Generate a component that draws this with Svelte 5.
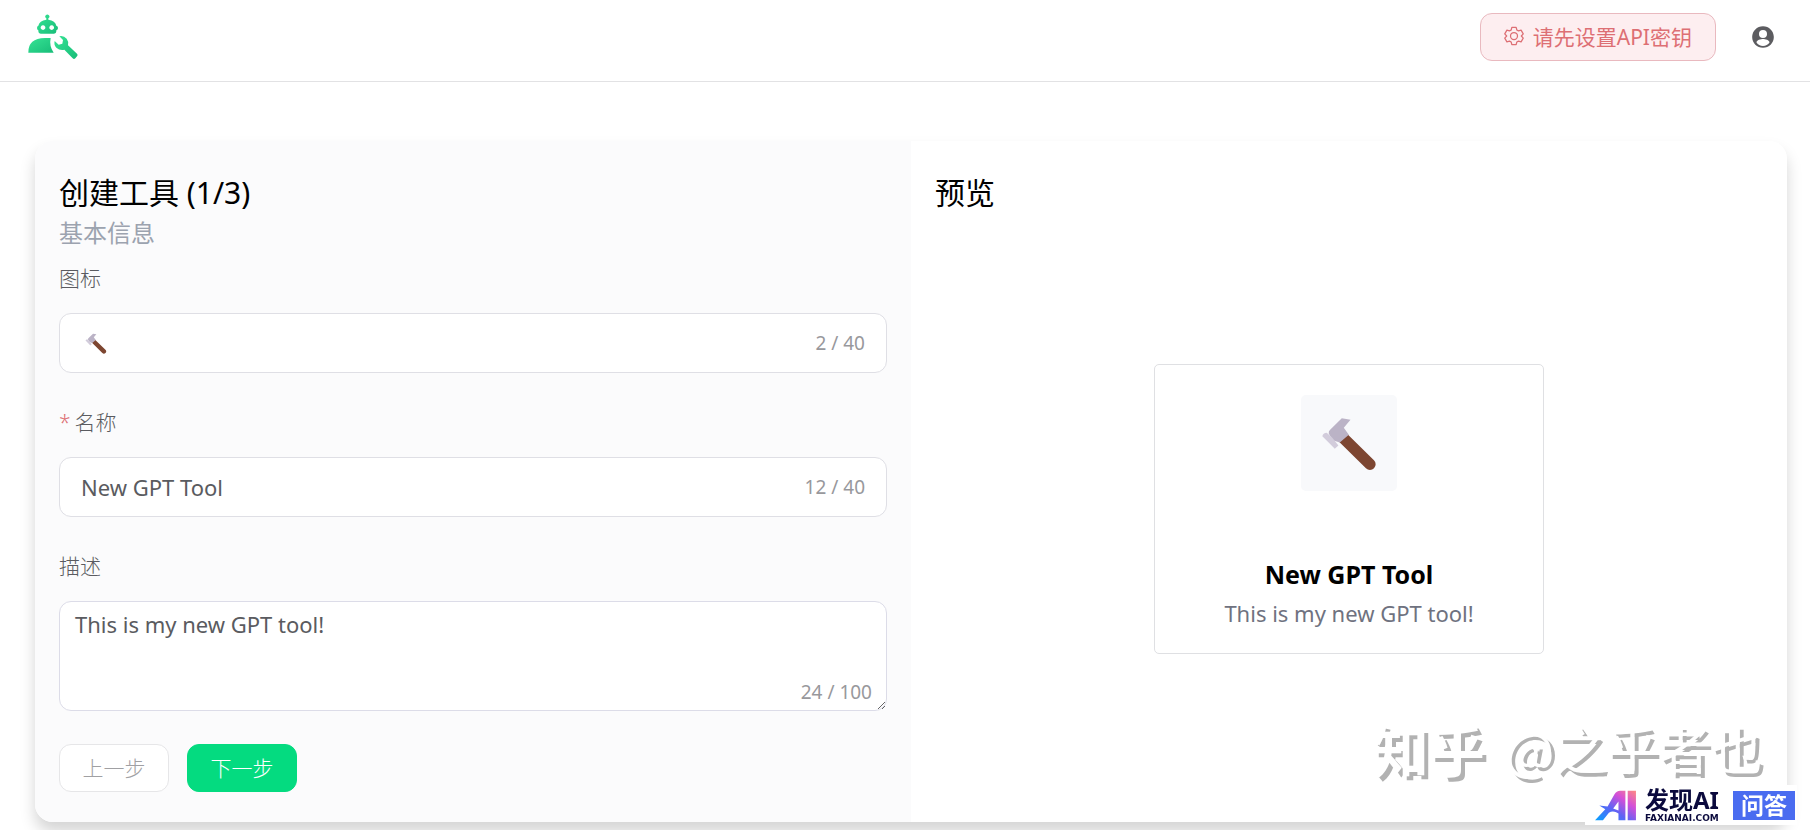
<script lang="ts">
  let icon = $state("🔨");
  let name = $state("New GPT Tool");
  let description = $state("This is my new GPT tool!");
</script>

{#snippet hammer()}
  <svg class="hammer" viewBox="545 194 170 170" aria-hidden="true">
    <path d="M613 267 691 344" stroke="#7d4631" stroke-width="34" stroke-linecap="round" />
    <path d="M607 207 633 211 613 235 628 256 601 279 580 272 568 252Q567 245 573 240Z" fill="#bbb3c6" />
    <path d="M549 260Q551 251 562 250L578 264 597 288 586 298 570 281Z" fill="#d2ccdb" />
  </svg>
{/snippet}

<header class="topbar">
  <a class="logo" href="/" aria-label="Home">
    <svg viewBox="82 40 154 138" aria-hidden="true">
      <defs>
        <linearGradient id="logo-fill" x1="0" y1="0" x2="1" y2="1">
          <stop offset="0" stop-color="#36e394" />
          <stop offset="1" stop-color="#18bd79" />
        </linearGradient>
      </defs>
      <g fill="url(#logo-fill)">
        <path
          fill-rule="evenodd"
          d="M139 57V53A6 6 0 1 1 145 53V57Q166 60 169 75Q174 76 174 82T169 89V92Q169 99 162 99H122Q115 99 115 92V89Q111 88 111 82T115 75Q118 60 139 57ZM129 74a7 7 0 1 0 .1 0ZM155 74a7 7 0 1 0 .1 0Z"
        />
        <path d="M85 156Q84 113 135 112H152Q147 136 161 156Z" />
        <path
          d="M178 107Q191 104 200 114Q207 123 204 134L231 159Q235 163 231 167L226 173Q222 177 218 173L193 147Q179 150 169 141Q161 133 164 121L176 132 187 129 189 118Z"
        />
      </g>
    </svg>
  </a>
  <div class="actions">
    <button class="api-key" type="button">
      <svg viewBox="0 0 24 24" aria-hidden="true">
        <path
          d="M9.4 1.6h5.2l.8 3.2 2 1.1 3.1-.9 2.6 4.5-2.3 2.5 2.3 2.5-2.6 4.5-3.1-.9-2 1.1-.8 3.2H9.4l-.8-3.2-2-1.1-3.1.9-2.6-4.5L3.2 12 .9 9.5 3.5 5l3.1.9 2-1.1Z"
        />
        <circle cx="12" cy="12" r="4.2" />
      </svg>
      请先设置API密钥
    </button>
    <button class="account" type="button" aria-label="Account">
      <svg viewBox="0 0 24 24" aria-hidden="true">
        <path
          d="M12 2C6.48 2 2 6.48 2 12s4.48 10 10 10 10-4.48 10-10S17.52 2 12 2zm0 3.5a3.7 3.7 0 1 1 0 7.4 3.7 3.7 0 0 1 0-7.4zm0 14.7c-2.5 0-4.71-1.28-6-3.22.03-1.99 4-3.08 6-3.08s5.97 1.09 6 3.08a7.2 7.2 0 0 1-6 3.22z"
        />
      </svg>
    </button>
  </div>
</header>

<main>
  <section class="panel editor">
    <h1>创建工具 (1/3)</h1>
    <p class="step">基本信息</p>
    <form onsubmit={(e) => e.preventDefault()}>
      <div class="field">
        <label for="tool-icon">图标</label>
        <div class="box">
          {@render hammer()}
          <input id="tool-icon" class="icon-value" bind:value={icon} maxlength="40" />
          <span class="count">{icon.length} / 40</span>
        </div>
      </div>
      <div class="field">
        <label for="tool-name"><span class="required">*</span>名称</label>
        <div class="box">
          <input id="tool-name" bind:value={name} maxlength="40" />
          <span class="count">{name.length} / 40</span>
        </div>
      </div>
      <div class="field">
        <label for="tool-description">描述</label>
        <div class="area">
          <textarea id="tool-description" bind:value={description} maxlength="100"></textarea>
          <span class="count">{description.length} / 100</span>
        </div>
      </div>
      <div class="steps">
        <button class="prev" type="button" disabled>上一步</button>
        <button class="next" type="submit">下一步</button>
      </div>
    </form>
  </section>

  <section class="panel preview">
    <h1>预览</h1>
    <div class="stage">
      <article class="tool">
        <div class="tile">{@render hammer()}</div>
        <h2>{name}</h2>
        <p>{description}</p>
      </article>
    </div>
  </section>
</main>

<div class="credit"><b>知乎</b><span>@之乎者也</span></div>

<div class="badge">
  <svg viewBox="730 268 128 94" aria-hidden="true">
    <defs>
      <linearGradient id="badge-fill" x1="0" y1="1" x2="1" y2="0">
        <stop offset="0" stop-color="#05a3ff" />
        <stop offset=".4" stop-color="#5d63f5" />
        <stop offset=".7" stop-color="#d44fd8" />
        <stop offset="1" stop-color="#ff8a80" />
      </linearGradient>
    </defs>
    <path
      fill="url(#badge-fill)"
      fill-rule="evenodd"
      d="M732 360 763 326 745 315 770 318 791 281Q797 270 808 270H824V360H803V339Q787 328 774 337L756 360ZM803 303 787 324 803 330ZM831 270H856V360H831Z"
    />
  </svg>
  <div class="brand">
    <strong>发现AI</strong>
    <small>FAXIANAI.COM</small>
  </div>
  <span class="tag">问答</span>
</div>

<style>
  :global(body) {
    margin: 0;
    background: #fff;
    color: #000;
    font-family: "Noto Sans", "Noto Sans CJK SC", sans-serif;
  }

  button,
  input,
  textarea {
    box-sizing: border-box;
    font: inherit;
  }

  h1,
  h2,
  p {
    margin: 0;
    font-weight: 400;
  }

  .topbar {
    display: flex;
    align-items: center;
    justify-content: space-between;
    box-sizing: border-box;
    height: 82px;
    padding: 0 34px 8px 27px;
    border-bottom: 1px solid #e2e2e4;
  }

  .logo svg {
    display: block;
    width: 52px;
    height: 46px;
  }

  .actions {
    display: flex;
    align-items: center;
    gap: 34px;
  }

  .api-key {
    display: flex;
    align-items: center;
    gap: 9px;
    height: 48px;
    padding: 0 23px 2px;
    border: 1px solid #e9b9bf;
    border-radius: 12px;
    background: #fdeef0;
    color: #dd6f74;
    font-size: 21px;
  }

  .api-key svg {
    width: 20px;
    height: 20px;
    fill: none;
    stroke: currentColor;
    stroke-width: 1.5;
    stroke-linejoin: round;
  }

  .account {
    padding: 0;
    border: 0;
    background: none;
  }

  .account svg {
    display: block;
    width: 26px;
    height: 26px;
    fill: #5c5c60;
  }

  main {
    display: flex;
    margin: 59px 23px 8px 35px;
    border-radius: 18px;
    box-shadow: 0 10px 15px rgba(0, 0, 0, 0.17);
  }

  .panel {
    flex: 1;
    box-sizing: border-box;
    min-width: 0;
    padding: 24px 24px 30px;
  }

  .editor {
    border-radius: 18px 0 0 18px;
    background: #fbfbfc;
  }

  .preview {
    display: flex;
    flex-direction: column;
    border-radius: 0 18px 18px 0;
    background: #fff;
  }

  h1 {
    font-size: 30px;
    line-height: 56px;
  }

  .step {
    color: #9ca3af;
    font-size: 24px;
    line-height: 24px;
  }

  .field {
    margin-bottom: 16px;
    color: #5a5b60;
    font-size: 22px;
  }

  label {
    display: block;
    padding-bottom: 2px;
    font-size: 21px;
    font-weight: 300;
    line-height: 66px;
  }

  .required {
    margin-right: 4px;
    color: #dd6f74;
  }

  .box {
    display: flex;
    align-items: center;
    box-sizing: border-box;
    height: 60px;
    padding: 0 21px;
    border: 1px solid #dfdfe5;
    border-radius: 12px;
    background: #fff;
  }

  .box input {
    flex: 1;
    min-width: 0;
    padding: 0;
    border: 0;
    outline: 0;
    background: none;
    color: #5a5b60;
  }

  .hammer {
    display: block;
    fill: none;
  }

  .box .hammer {
    width: 22px;
    height: 22px;
    margin-left: 4px;
  }

  .box .icon-value {
    color: transparent;
  }

  .count {
    color: #98989c;
    font-size: 19px;
    line-height: 24px;
  }

  .area {
    position: relative;
  }

  textarea {
    display: block;
    width: 100%;
    height: 110px;
    padding: 7px 15px;
    border: 1px solid #dcdce8;
    border-radius: 12px;
    outline: 0;
    background: #fff;
    color: #5a5b60;
    line-height: 30px;
    resize: vertical;
  }

  .area .count {
    position: absolute;
    right: 15px;
    bottom: 7px;
  }

  .steps {
    display: flex;
    gap: 18px;
    padding-top: 17px;
  }

  .steps button {
    width: 110px;
    height: 48px;
    padding: 0 0 3px;
    border: 1px solid #e6e6e8;
    border-radius: 12px;
    font-size: 21px;
    font-weight: 300;
  }

  .steps .prev {
    background: #fff;
    color: #a0a0a3;
  }

  .steps .next {
    border-color: #04db80;
    background: #04db80;
    color: #fff;
  }

  .stage {
    display: flex;
    flex: 1;
    align-items: center;
    justify-content: center;
  }

  .tool {
    display: flex;
    flex-direction: column;
    align-items: center;
    box-sizing: border-box;
    width: 390px;
    margin-top: 4px;
    padding: 30px 24px 20px;
    border: 1px solid #dfe0e3;
    border-radius: 5px;
  }

  .tile {
    display: grid;
    place-items: center;
    width: 96px;
    height: 96px;
    margin-bottom: 64px;
    border-radius: 5px;
    background: #f8f9fb;
  }

  .tile .hammer {
    width: 57px;
    height: 57px;
  }

  h2 {
    font-size: 25px;
    font-weight: 700;
    line-height: 39px;
  }

  .tool p {
    color: #6f7280;
    font-size: 22px;
    line-height: 39px;
  }

  .credit {
    position: fixed;
    right: 48px;
    bottom: 54px;
    display: flex;
    align-items: center;
    gap: 20px;
    color: #fff;
    font-family: "Noto Sans CJK SC", sans-serif;
    font-size: 52px;
    line-height: 56px;
    text-shadow: 4px 4px 0 #b2b2b2;
    white-space: nowrap;
    pointer-events: none;
  }

  .credit b {
    font-size: 56px;
  }

  .badge {
    position: fixed;
    right: 13px;
    bottom: 5px;
    display: flex;
    align-items: center;
    box-sizing: border-box;
    height: 40px;
    padding: 0 2px 0 9px;
    background: #fff;
  }

  .badge svg {
    width: 43px;
    height: 31px;
    margin-right: 8px;
  }

  .brand {
    display: flex;
    flex-direction: column;
    width: 88px;
    color: #0b0a3d;
  }

  .brand strong {
    font-size: 24px;
    line-height: 26px;
  }

  .brand small {
    font-family: "DejaVu Sans", sans-serif;
    font-size: 9px;
    font-weight: 700;
    line-height: 10px;
  }

  .tag {
    width: 62px;
    background: #4a6cf0;
    color: #fff;
    font-size: 23px;
    font-weight: 700;
    line-height: 29px;
    text-align: center;
  }
</style>
